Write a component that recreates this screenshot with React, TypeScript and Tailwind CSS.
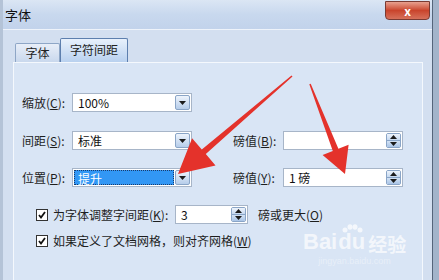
import type { ReactNode } from 'react';

function DropButton() {
  return (
    <div className="w-[15px] h-full shrink-0 rounded-[2px] border border-[#8aa5c7] bg-gradient-to-b from-[#eef4fc] to-[#b6cdea] flex items-center justify-center">
      <svg width="7" height="4" viewBox="0 0 7 4">
        <path d="M0 0h7L3.5 4z" fill="#1b1b1b" />
      </svg>
    </div>
  );
}

function SpinButton() {
  return (
    <div className="w-[15px] h-full shrink-0 flex flex-col rounded-[2px] border border-[#8aa5c7] overflow-hidden">
      <div className="flex-1 bg-gradient-to-b from-[#eef4fc] to-[#c6d9f0] flex items-center justify-center border-b border-[#8aa5c7]">
        <svg width="7" height="4" viewBox="0 0 7 4">
          <path d="M0 4h7L3.5 0z" fill="#1b1b1b" />
        </svg>
      </div>
      <div className="flex-1 bg-gradient-to-b from-[#d4e3f5] to-[#a9c4e6] flex items-center justify-center">
        <svg width="7" height="4" viewBox="0 0 7 4">
          <path d="M0 0h7L3.5 4z" fill="#1b1b1b" />
        </svg>
      </div>
    </div>
  );
}

function Combo({ value, selected }: { value: string; selected?: boolean }) {
  return (
    <div className="w-[120px] h-[19px] bg-white border border-[#a7b5c8] flex items-stretch p-px gap-px">
      {selected ? (
        <div className="flex-1 bg-[#3297f5] text-white border border-dotted border-[#1a3a6a] pl-[3px] leading-[15px]">{value}</div>
      ) : (
        <div className="flex-1 pl-[4px] leading-[15px] text-[#111]">{value}</div>
      )}
      <DropButton />
    </div>
  );
}

function Spin({ value, width }: { value: string; width: string }) {
  return (
    <div className={`${width} h-[19px] bg-white border border-[#a7b5c8] flex items-stretch p-px`}>
      <div className="flex-1 pl-[4px] leading-[15px] text-[#111]">{value}</div>
      <SpinButton />
    </div>
  );
}

function Label({ text, k, w = 'w-[50px]' }: { text: string; k: string; w?: string }) {
  return (
    <div className={`${w} shrink-0 text-[#1e1e1e]`}>
      {text}(<span className="underline">{k}</span>):
    </div>
  );
}

function Check({ children }: { children: ReactNode }) {
  return (
    <div className="flex items-center h-[19px]">
      <div className="ml-[14px] w-[12px] h-[12px] border border-[#333] bg-white flex items-center justify-center">
        <svg width="8" height="8" viewBox="0 0 8 8">
          <path d="M1 4l2 2.5L7 1" stroke="#111" strokeWidth="1.8" fill="none" />
        </svg>
      </div>
      <div className="ml-[5px] flex items-center text-[#1e1e1e]">{children}</div>
    </div>
  );
}

export default function App() {
  return (
    <div className="relative w-[439px] h-[280px] overflow-hidden flex bg-[#a9b9cf] font-['Noto_Sans_CJK_SC','Noto_Sans',sans-serif] text-[12px]">
      <div className="w-[433px] h-full flex flex-col border-l-[3px] border-l-[#b4c3d7] border-r border-r-[#55657a] bg-[#d3dff0]">
        {/* Title bar */}
        <div className="h-[30px] shrink-0 flex items-start justify-between bg-gradient-to-b from-[#dbe6f4] via-[#c8d8ee] to-[#c2d3eb] border-b border-[#eef3fa]">
          <div className="pl-[2px] pt-[5px] text-[13px] text-[#111]">字体</div>
          <div className="mt-[1px] mr-[2px] w-[45px] h-[19px] rounded-b-[4px] border border-[#7a3b33] bg-gradient-to-b from-[#e7a08f] via-[#c9442c] to-[#d6705a] flex items-center justify-center text-white font-bold text-[12px] leading-none">
            x
          </div>
        </div>

        {/* Tabs */}
        <div className="flex items-end h-[32px] pl-[12px] pt-[8px]">
          <div className="w-[45px] h-[19px] rounded-t-[2px] border border-b-0 border-[#8ea6c6] bg-gradient-to-b from-[#e8eef8] to-[#c9d8ed] flex items-center justify-center text-[#222]">
            字体
          </div>
          <div className="w-[68px] h-[24px] rounded-t-[2px] border border-b-0 border-[#5d7fae] bg-gradient-to-b from-[#e8f1fc] to-[#b9d1ef] flex items-start justify-center pt-[2px] text-[#222]">
            字符间距
          </div>
        </div>

        {/* Panel */}
        <div className="ml-[10px] w-[410px] flex-1 border-t border-l border-r border-[#f4f8fd] bg-[#d9e5f5] flex flex-col pl-[8px]">
          <div className="mt-[30px] flex items-center">
            <Label text="缩放" k="C" />
            <Combo value="100%" />
          </div>
          <div className="mt-[19px] flex items-center">
            <Label text="间距" k="S" />
            <Combo value="标准" />
            <div className="w-[41px]" />
            <Label text="磅值" k="B" />
            <Spin value="" width="w-[120px]" />
          </div>
          <div className="mt-[18px] flex items-center">
            <Label text="位置" k="P" />
            <Combo value="提升" selected />
            <div className="w-[41px]" />
            <Label text="磅值" k="Y" />
            <Spin value="1 磅" width="w-[120px]" />
          </div>
          <div className="mt-[18px]">
            <Check>
              <span className="w-[122px]">
                为字体调整字间距(<span className="underline">K</span>):
              </span>
              <Spin value="3" width="w-[73px]" />
              <span className="ml-[10px]">
                磅或更大(<span className="underline">O</span>)
              </span>
            </Check>
          </div>
          <div className="mt-[7px]">
            <Check>
              <span>
                如果定义了文档网格，则对齐网格(<span className="underline">W</span>)
              </span>
            </Check>
          </div>
        </div>
      </div>
      <div className="flex-1 bg-[#a3b4ca]" />

      {/* Watermark */}
      <div className="absolute left-[303px] top-[224px] flex flex-col items-center text-white/70 pointer-events-none">
        <div className="flex items-end font-['Liberation_Sans',sans-serif] font-bold text-[22px] leading-none">
          <span>Bai</span>
          <span className="relative mx-[1px] flex flex-col items-center">
            <svg width="22" height="9" viewBox="0 0 22 9" className="mb-[-2px]">
              <g fill="rgba(255,255,255,0.7)">
                <ellipse cx="4" cy="6" rx="2.5" ry="2.5" />
                <ellipse cx="9" cy="3" rx="2.5" ry="2.8" />
                <ellipse cx="14" cy="3" rx="2.5" ry="2.8" />
                <ellipse cx="19" cy="6" rx="2.5" ry="2.5" />
              </g>
            </svg>
            <span>du</span>
          </span>
          <span className="font-['Noto_Sans_CJK_SC',sans-serif] text-[19px] ml-[2px]">经验</span>
        </div>
        <div className="text-[9px] text-white/40 leading-none mt-[4px] font-['Liberation_Sans',sans-serif]">jingyan.baidu.com</div>
      </div>

      {/* Red arrows */}
      <svg className="absolute inset-0 pointer-events-none" width="439" height="280" viewBox="0 0 439 280">
        <polygon
          points="291.5,75.5 201.8,149.5 192.1,138.2 178,174 215.5,165.4 205.8,154.1 292.5,76.5"
          fill="#e4322b"
        />
        <polygon
          points="309.3,84.3 332.8,150.9 322.6,154.9 345,174 348.6,144.7 338.4,148.7 310.7,83.7"
          fill="#e4322b"
        />
      </svg>
    </div>
  );
}
